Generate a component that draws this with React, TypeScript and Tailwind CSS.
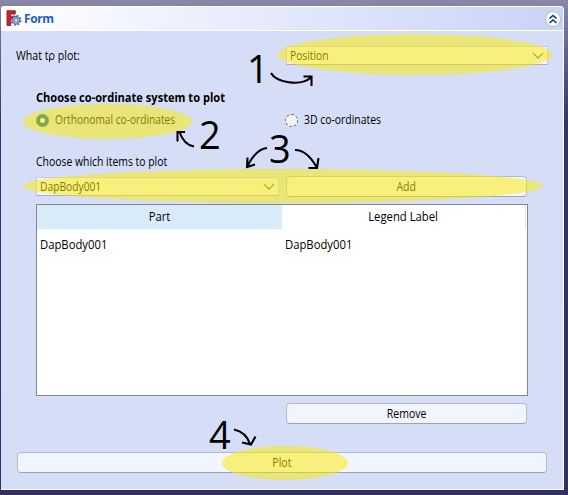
import React from "react";

const ui = "whitespace-nowrap text-[12px] leading-[16px]";
const leftNarrow = "inline-block origin-left";

function Chevron() {
  return (
    <svg width="12" height="8" viewBox="0 0 12 8" fill="none" stroke="#555" strokeWidth="1.1">
      <path d="M1 1.2 6 6.2 11 1.2" />
    </svg>
  );
}

function FormIcon() {
  return (
    <svg width="16" height="17" viewBox="0 0 16 17">
      <path d="M1 .7h8.3v3.4H4.7v2.5h3.5v3.2H4.7v5.7H1z" fill="#d51f24" stroke="#781b20" strokeWidth=".8" />
      <circle cx="10" cy="10.3" r="4.5" fill="none" stroke="#526f9f" strokeWidth="2" strokeDasharray="1.8 1.734" />
      <circle cx="10" cy="10.3" r="2.9" fill="#eef3ff" stroke="#42628f" strokeWidth="2.7" />
      <circle cx="10" cy="10.3" r="2.9" fill="none" stroke="#88a9d4" strokeWidth="1.5" />
    </svg>
  );
}

function Button({ children, className = "" }: { children: React.ReactNode; className?: string }) {
  return (
    <button className={`flex h-[21px] items-center justify-center rounded-[4px] border border-[#b3bacf] border-b-[#9ca4b8] bg-[#f2f5fe] ${ui} ${className}`}>
      <span className="inline-block scale-x-[.875]">{children}</span>
    </button>
  );
}

function Select({ children, className = "" }: { children: React.ReactNode; className?: string }) {
  return (
    <div className={`flex h-[19px] items-center justify-between rounded-[1px] border border-[#c5cce2] border-b-[#a6aec4] bg-[#f2f5fe] pr-[3px] pl-[3px] ${ui} ${className}`}>
      <span className={`${leftNarrow} scale-x-[.855]`}>{children}</span>
      <Chevron />
    </div>
  );
}

function Annotations() {
  const num = "absolute font-['Open_Sans',sans-serif] text-[38px] leading-[38px]";
  return (
    <div className="pointer-events-none absolute inset-0">
      <svg className="absolute inset-0" width="568" height="495" viewBox="0 0 568 495">
        <g fill="#fbeb00" fillOpacity=".51">
          <ellipse cx="415" cy="54.5" rx="137" ry="20.5" />
          <ellipse cx="107.5" cy="121.5" rx="84.5" ry="17.5" />
          <ellipse cx="283" cy="186" rx="260" ry="17" />
          <ellipse cx="285" cy="463" rx="63" ry="17" />
        </g>
        <g fill="none" stroke="#000" strokeWidth="2.1">
          <path d="M271 73C276 82 300 87 311 77.500M303.500 76.500h8v9.500" />
          <path d="M194 146.500Q184 145 179.500 132M177.500 141.500V132h7.500" />
          <path d="M267 148Q256 149 247.500 166M247.500 157.500l-.5 9.500 8-2.500" />
          <path d="M295 150Q307 150 316.500 167M318.500 158l-1.500 10h-8.500" />
          <path d="M234 429.500Q246 432 250 444M255.500 436.500 251 444.500l-9-2" />
        </g>
        <path d="M49.500 58v4" stroke="#222" />
      </svg>
      <span className={`${num} left-[247px] top-[49px]`}>1</span>
      <span className={`${num} left-[199px] top-[115px]`}>2</span>
      <span className={`${num} left-[269px] top-[129px]`}>3</span>
      <span className={`${num} left-[209px] top-[415px]`}>4</span>
    </div>
  );
}

export default function App() {
  return (
    <div className="relative h-[495px] w-[568px] overflow-hidden bg-gradient-to-b from-[#8a87a7] via-[#353366] via-25% to-[#32305f] pt-[6px] pl-[1px] font-['Open_Sans','Noto_Sans',sans-serif] text-black">
      <div className="flex h-[484px] w-[563px] flex-col rounded-t-[4px] border-r border-b border-white bg-[#d6def7]">
        <header className="flex h-[25px] shrink-0 items-center justify-between rounded-t-[3px] border-t border-b border-white bg-gradient-to-r from-white to-[#c8d3f6] pr-[2px] pl-[5px]">
          <div className="flex items-center gap-[2px]">
            <FormIcon />
            <span className="text-[12px] leading-[16px] font-bold tracking-[-0.4px] text-[#215dc6]">Form</span>
          </div>
          <span className="flex size-[16px] items-center justify-center rounded-full border border-[#b4bbd4] bg-white">
            <svg width="10" height="10" viewBox="0 0 10 10" fill="none" stroke="#003399" strokeWidth="1.6"><path d="m1.500 4.500 3.500-3 3.500 3M1.500 9 5 6l3.500 3" /></svg>
          </span>
        </header>
        <main className="flex flex-col pr-[15px] pl-[15px] pt-[15px]">
          <div className="flex h-[19px] items-center">
            <span className={`w-[270px] ${ui}`}><span className={`${leftNarrow} scale-x-[.885]`}>What to plot:</span></span>
            <Select className="w-[262px]">Position</Select>
          </div>
          <section className="flex flex-col pl-[20px] pr-[20px] pt-[25px]">
            <h2 className={`${ui} font-bold`}><span className={`${leftNarrow} scale-x-[.925]`}>Choose co-ordinate system to plot</span></h2>
            <div className="mt-[6px] flex h-[16px] items-center">
              <label className={`flex w-[249px] items-center gap-[6px] ${ui}`}>
                <span className="size-[13px] shrink-0 rounded-full border-4 border-[#0c5e9c] bg-white" />
                <span className={`${leftNarrow} scale-x-[.848]`}>Orthonomal co-ordinates</span>
              </label>
              <label className={`flex items-center gap-[6px] ${ui}`}>
                <span className="size-[13px] shrink-0 rounded-full border border-dashed border-[#626262] bg-[#f3f3f3]" />
                <span className={`${leftNarrow} scale-x-[.867]`}>3D co-ordinates</span>
              </label>
            </div>
            <p className={`mt-[26px] ${ui}`}><span className={`${leftNarrow} scale-x-[.867]`}>Choose which items to plot</span></p>
            <div className="mt-[6px] flex items-center gap-[7px]">
              <Select className="w-[243px]">DapBody001</Select>
              <Button className="w-[241px]">Add</Button>
            </div>
            <div className="mt-[7px] h-[192px] w-[492px] border border-[#828790] bg-white">
              <div className={`grid h-[24px] grid-cols-[245px_244px] items-stretch text-center ${ui}`}>
                <div className="flex items-center justify-center bg-[#d9ebf9]"><span className="inline-block scale-x-[.94]">Part</span></div>
                <div className="flex items-center justify-center border-r border-[#e5e5e5]"><span className="inline-block scale-x-[.94]">Legend Label</span></div>
              </div>
              <div className={`grid h-[32px] grid-cols-[245px_244px] items-center ${ui}`}>
                <span className="pl-[3px]"><span className={`${leftNarrow} scale-x-[.94]`}>DapBody001</span></span>
                <span className="pl-[3px]"><span className={`${leftNarrow} scale-x-[.94]`}>DapBody001</span></span>
              </div>
            </div>
            <Button className="mt-[7px] ml-[250px] w-[241px]">Remove</Button>
          </section>
          <Button className="mt-[28px] ml-[1px] w-[530px]">Plot</Button>
        </main>
      </div>
      <Annotations />
    </div>
  );
}
